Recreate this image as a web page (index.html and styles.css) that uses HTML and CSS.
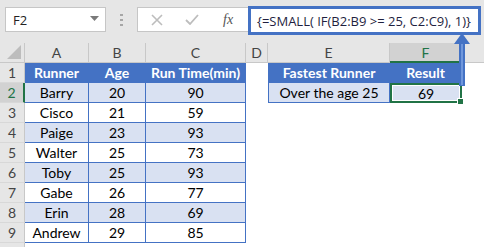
FILE: index.html
```html
<!DOCTYPE html>
<html lang="en">

<head>
    <meta charset="UTF-8">
    <meta name="viewport" content="width=device-width, initial-scale=1.0">
    <title>SMALL IF array formula</title>
    <link rel="stylesheet" href="styles.css">
</head>

<body>
    <div class="toolbar">
        <div class="namebox">
            <span>F2</span>
            <svg class="drop" width="9" height="5" viewBox="0 0 9 5"><polygon points="0,0 9,0 4.5,5" fill="#7a7a7a"/></svg>
        </div>
        <div class="dots">
            <svg width="3" height="12" viewBox="0 0 3 12">
                <rect x="0" y="0" width="3" height="2" fill="#a6a6a6"/>
                <rect x="0" y="5" width="3" height="2" fill="#a6a6a6"/>
                <rect x="0" y="10" width="3" height="2" fill="#a6a6a6"/>
            </svg>
        </div>
        <div class="fxbox">
            <svg width="12" height="12" viewBox="0 0 12 12"><path d="M1 1 L11 11 M11 1 L1 11" stroke="#bdbdbd" stroke-width="1.6"/></svg>
            <svg width="14" height="11" viewBox="0 0 14 11"><path d="M1 6 L5 10 L13 1" stroke="#bdbdbd" stroke-width="1.8" fill="none"/></svg>
            <span class="fx">fx</span>
        </div>
        <div class="formula">{=SMALL( IF(B2:B9 &gt;= 25, C2:C9), 1)}</div>
    </div>

    <div class="sheet">
        <div class="corner"><svg width="14" height="14" viewBox="0 0 14 14"><polygon points="14,0 14,14 0,14" fill="#bdbdbd"/></svg></div>
        <div class="col-head">A</div>
        <div class="col-head">B</div>
        <div class="col-head">C</div>
        <div class="col-head">D</div>
        <div class="col-head">E</div>
        <div class="col-head sel">F</div>
        <div class="col-head last"></div>

        <div class="row-head">1</div>
        <div class="cell t th">Runner</div>
        <div class="cell t th">Age</div>
        <div class="cell t th">Run Time(min)</div>
        <div class="cell"></div>
        <div class="cell t th lft">Fastest Runner</div>
        <div class="cell t th">Result</div>
        <div class="cell"></div>

        <div class="row-head sel">2</div>
        <div class="cell t alt">Barry</div>
        <div class="cell t alt">20</div>
        <div class="cell t alt">90</div>
        <div class="cell"></div>
        <div class="cell t alt lft">Over the age 25</div>
        <div class="cell t alt active">69</div>
        <div class="cell"></div>

        <div class="row-head">3</div>
        <div class="cell t">Cisco</div>
        <div class="cell t">21</div>
        <div class="cell t">59</div>
        <div class="cell"></div><div class="cell"></div><div class="cell"></div><div class="cell"></div>

        <div class="row-head">4</div>
        <div class="cell t alt">Paige</div>
        <div class="cell t alt">23</div>
        <div class="cell t alt">93</div>
        <div class="cell"></div><div class="cell"></div><div class="cell"></div><div class="cell"></div>

        <div class="row-head">5</div>
        <div class="cell t">Walter</div>
        <div class="cell t">25</div>
        <div class="cell t">73</div>
        <div class="cell"></div><div class="cell"></div><div class="cell"></div><div class="cell"></div>

        <div class="row-head">6</div>
        <div class="cell t alt">Toby</div>
        <div class="cell t alt">25</div>
        <div class="cell t alt">93</div>
        <div class="cell"></div><div class="cell"></div><div class="cell"></div><div class="cell"></div>

        <div class="row-head">7</div>
        <div class="cell t">Gabe</div>
        <div class="cell t">26</div>
        <div class="cell t">77</div>
        <div class="cell"></div><div class="cell"></div><div class="cell"></div><div class="cell"></div>

        <div class="row-head">8</div>
        <div class="cell t alt">Erin</div>
        <div class="cell t alt">28</div>
        <div class="cell t alt">69</div>
        <div class="cell"></div><div class="cell"></div><div class="cell"></div><div class="cell"></div>

        <div class="row-head">9</div>
        <div class="cell t">Andrew</div>
        <div class="cell t">29</div>
        <div class="cell t">85</div>
        <div class="cell"></div><div class="cell"></div><div class="cell"></div><div class="cell"></div>

        <div class="row-head"></div>
        <div class="cell"></div><div class="cell"></div><div class="cell"></div><div class="cell"></div>
        <div class="cell"></div><div class="cell"></div><div class="cell"></div>
    </div>

    <!-- arrow from the formula bar down to the result -->
    <svg class="arrow" width="16" height="53" viewBox="0 0 16 53">
        <polygon points="0,11 8,0 16,11" fill="#4472c4"/>
        <rect x="5" y="10" width="6" height="43" fill="#4472c4"/>
        <rect x="7" y="11" width="2" height="41" fill="#6f97dc"/>
    </svg>
</body>

</html>
```

FILE: styles.css
```css
body {
    margin: 0;
    width: 484px;
    height: 247px;
    overflow: hidden;
    background-color: #ffffff;
    font-family: Lato, "Liberation Sans", sans-serif;
    position: relative;
}

.toolbar {
    height: 43px;
    background-color: #e6e6e6;
    display: flex;
    align-items: flex-start;
    padding: 7px 0 0 5px;
    box-sizing: border-box;
}

.namebox {
    width: 101px;
    height: 25px;
    background-color: #ffffff;
    border: 1px solid #c6c6c6;
    box-sizing: border-box;
    display: flex;
    align-items: center;
    justify-content: space-between;
    padding: 0 6px 0 7px;
    font-family: "Open Sans", sans-serif;
    font-size: 13px;
    color: #222222;
}

.drop {
    margin-top: -3px;
}

.dots {
    width: 31px;
    height: 25px;
    display: flex;
    justify-content: center;
    align-items: center;
}

.fxbox {
    width: 111px;
    height: 25px;
    background-color: #ffffff;
    border: 1px solid #c6c6c6;
    border-right: none;
    box-sizing: border-box;
    display: flex;
    align-items: center;
    padding-left: 13px;
    gap: 22px;
}

.fx {
    font-family: "Liberation Serif", serif;
    font-style: italic;
    font-size: 14px;
    color: #555555;
    margin-left: 2px;
}

.formula {
    width: 233px;
    height: 29px;
    margin-top: -1px;
    background-color: #ffffff;
    border: 3px solid #4472c4;
    box-sizing: border-box;
    display: flex;
    align-items: center;
    padding-left: 6px;
    font-family: "Open Sans", sans-serif;
    font-size: 13px;
    color: #1f1f3f;
    white-space: nowrap;
}

.sheet {
    display: grid;
    grid-template-columns: 25px 64px 57px 100px 22px 122px 72px 22px;
    grid-auto-rows: 20px;
    font-size: 14px;
    color: #000000;
}

.sheet > div {
    box-sizing: border-box;
    display: flex;
    align-items: center;
    justify-content: center;
}

.corner {
    background-color: #e6e6e6;
    border-right: 1px solid #c8c8c8;
    border-bottom: 1px solid #c8c8c8;
    align-items: flex-end !important;
    justify-content: flex-end !important;
    padding: 0 3px 3px 0;
}

.col-head {
    background-color: #e6e6e6;
    border-right: 1px solid #c8c8c8;
    border-bottom: 1px solid #c8c8c8;
    color: #444444;
}

.col-head.last {
    border-right: none;
}

.row-head {
    background-color: #e6e6e6;
    border-right: 1px solid #c8c8c8;
    border-bottom: 1px solid #d8d8d8;
    color: #444444;
}

.col-head.sel {
    background-color: #d2d2d2;
    border-bottom: 2px solid #217346;
    color: #217346;
}

.row-head.sel {
    background-color: #d2d2d2;
    border-right: 2px solid #217346;
    color: #217346;
}

.cell {
    background-color: #ffffff;
}

.cell.t {
    border-right: 1px solid #4472c4;
    border-bottom: 1px solid #4472c4;
}

.cell.lft {
    border-left: 1px solid #4472c4;
}

.cell.th {
    background-color: #4472c4;
    color: #ffffff;
    font-weight: bold;
}

.cell.alt {
    background-color: #d9e1f2;
}

.cell.active {
    position: relative;
    border: none;
    box-shadow: inset 0 0 0 2px #217346, inset 0 0 0 3px #ffffff;
}

.cell.active::after {
    content: "";
    position: absolute;
    right: -2px;
    bottom: -2px;
    width: 5px;
    height: 5px;
    background-color: #217346;
    border: 1px solid #ffffff;
}

.arrow {
    position: absolute;
    left: 454px;
    top: 33px;
}
```
